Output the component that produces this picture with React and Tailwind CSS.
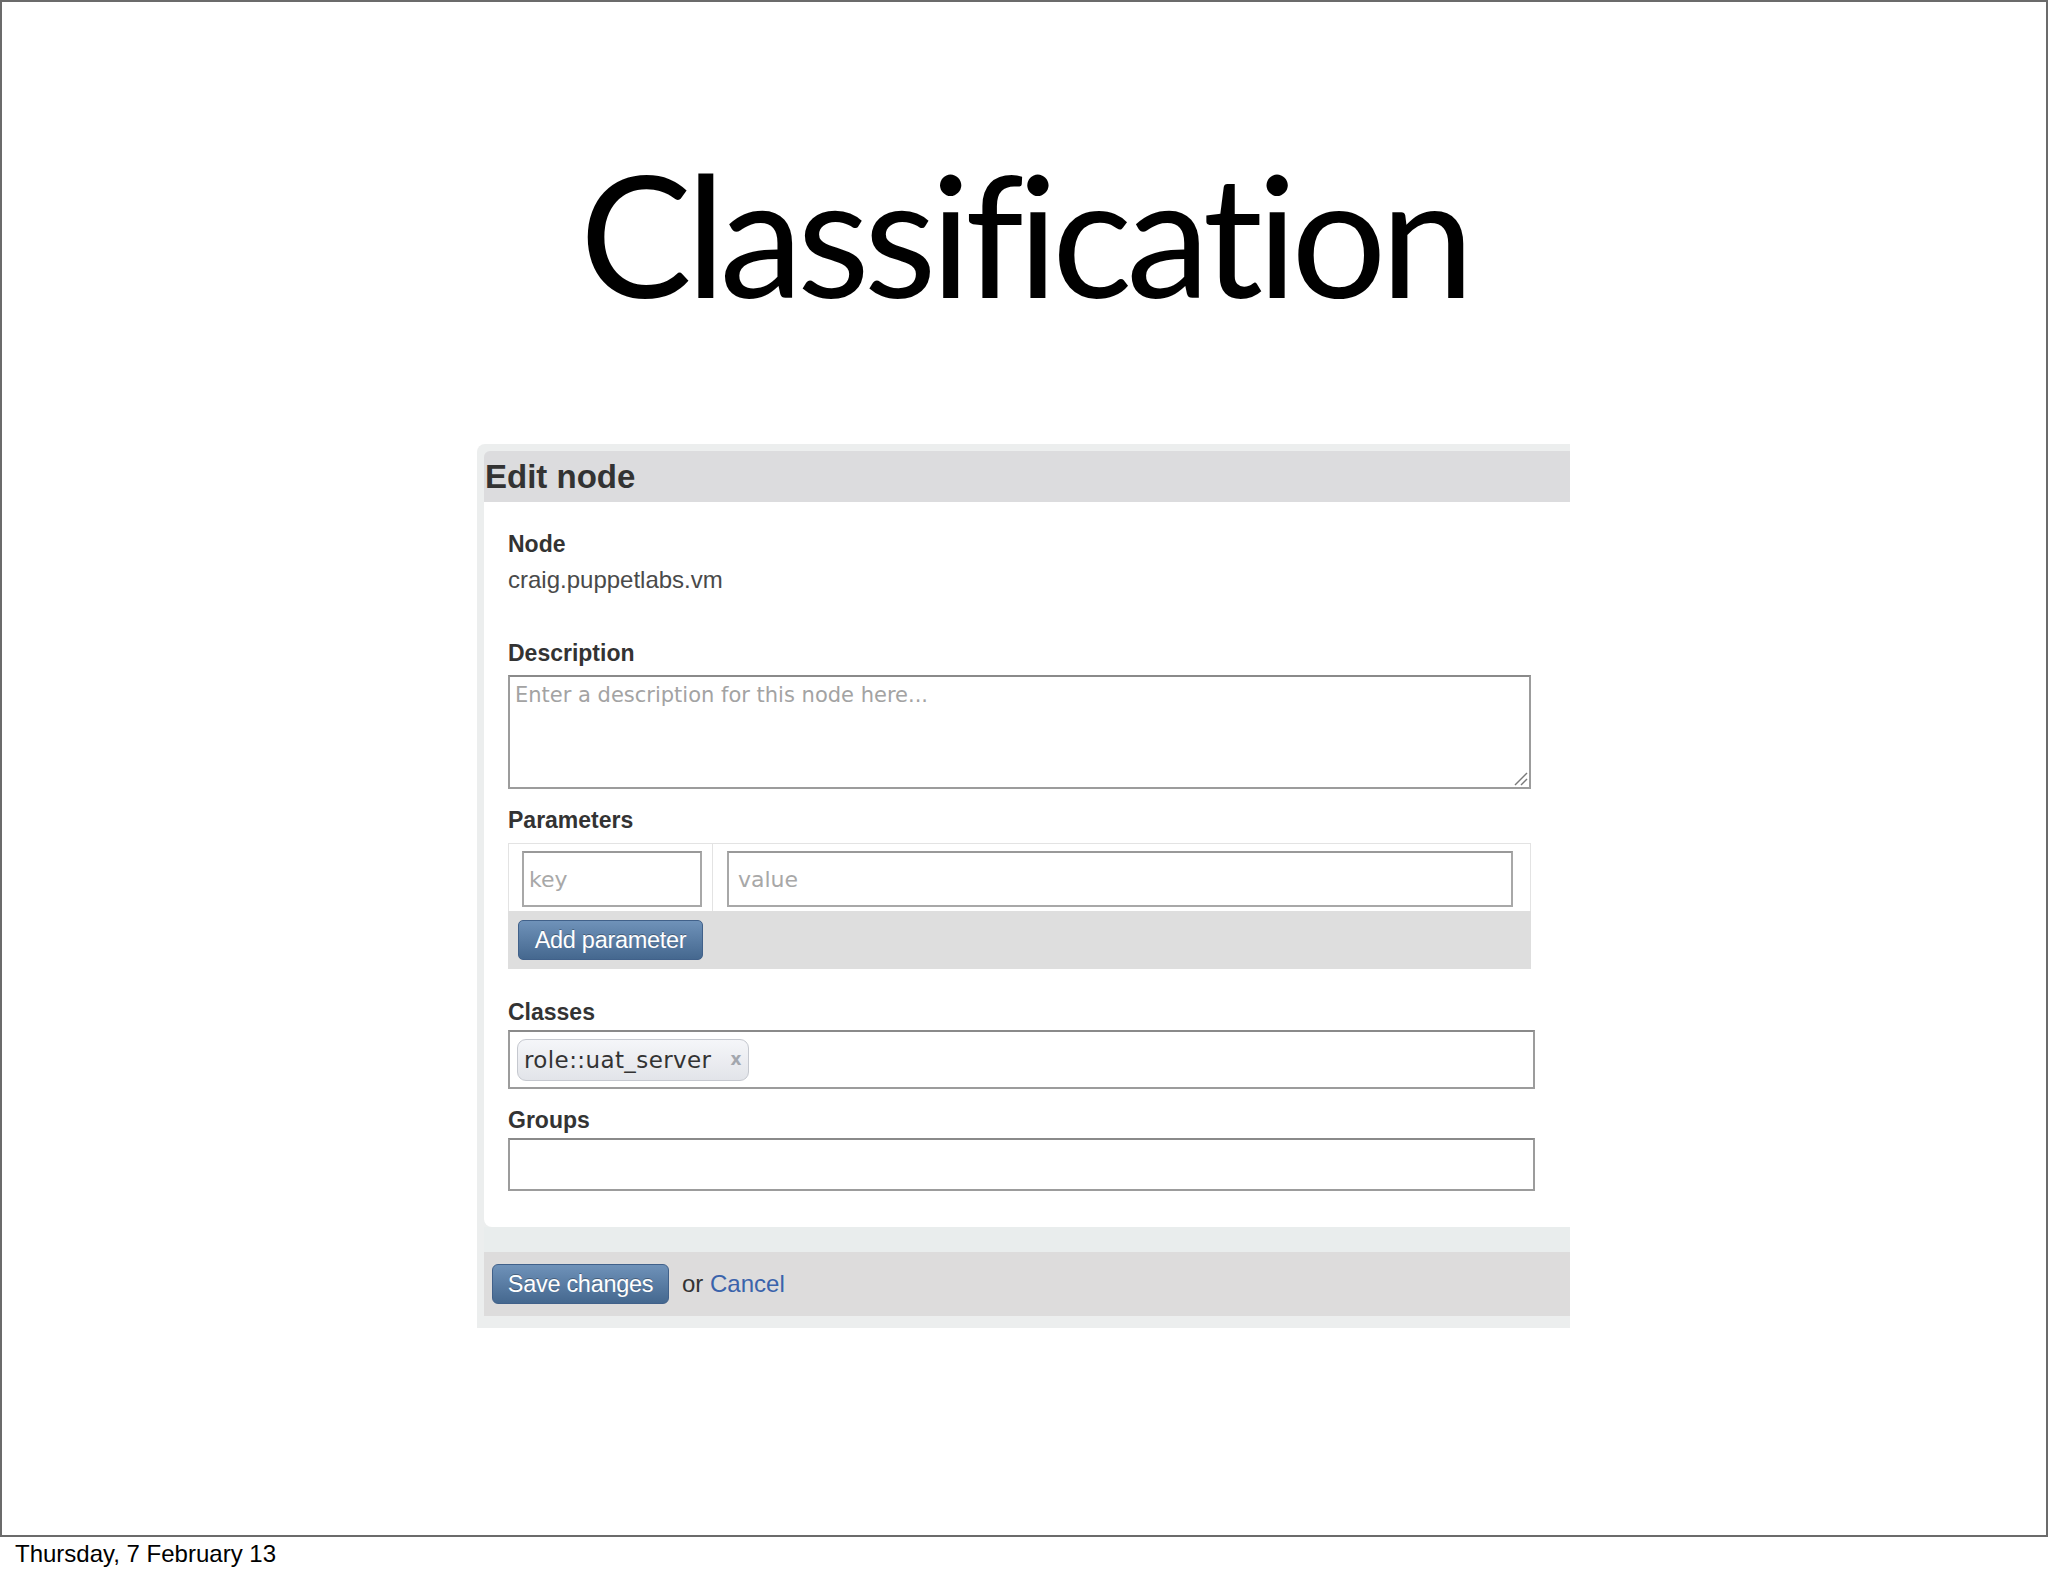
export default function App() {
  const label = "font-bold text-[23px] leading-[28px] text-[#333333]";
  return (
    <div className="w-[2048px] h-[1576px] bg-white font-['Liberation_Sans',Arial,sans-serif]">
      <div className="h-[1537px] border-2 border-[#6b6b6b] flex flex-col">
        <h1 className="mt-[147px] h-[168px] text-center font-['Lato',sans-serif] text-[168px] leading-[168px] text-black tracking-[-6px]">
          Classification
        </h1>
        <div className="mt-[127px] ml-[475px] w-[1093px] bg-[#eceeee] pl-[7px] pt-[7px] pb-[12px] rounded-tl-[8px]">
          <div className="h-[51px] bg-[#dcdcde] rounded-tl-[6px] pl-[1px] font-bold text-[33px] leading-[51px] text-[#333333]">
            Edit node
          </div>
          <div className="bg-white rounded-bl-[8px] pl-[24px] pb-[36px] flex flex-col">
            <div className={`${label} mt-[28px]`}>Node</div>
            <div className="mt-[8px] text-[24px] leading-[28px] text-[#4a4a4a]">craig.puppetlabs.vm</div>
            <div className={`${label} mt-[45px]`}>Description</div>
            <div className="relative mt-[8px] h-[114px] w-[1023px] border-2 border-[#9c9c9c] border-t-[#8a8a8a] bg-white pl-[5px] pt-[6px] font-['DejaVu_Sans',sans-serif] text-[21px] leading-[24px] text-[#a3a3a3]">
              Enter a description for this node here...
              <svg className="absolute right-[1px] bottom-[1px]" width="16" height="16" viewBox="0 0 16 16">
                <line x1="15" y1="3" x2="3" y2="15" stroke="#7a7a7a" strokeWidth="1.5" />
                <line x1="15" y1="9" x2="9" y2="15" stroke="#7a7a7a" strokeWidth="1.5" />
              </svg>
            </div>
            <div className={`${label} mt-[17px]`}>Parameters</div>
            <div className="mt-[9px] w-[1023px] h-[126px] flex flex-col">
              <div className="h-[68px] flex border-t border-x border-[#e3e3e3] bg-white">
                <div className="w-[204px] border-r border-[#e3e3e3] pl-[13px] pt-[7px]">
                  <div className="w-[180px] h-[56px] border-2 border-[#a8a8a8] border-t-[#999999] pl-[5px] flex items-center font-['DejaVu_Sans',sans-serif] text-[22px] text-[#a8a8a8]">
                    key
                  </div>
                </div>
                <div className="flex-1 pl-[14px] pr-[17px] pt-[7px]">
                  <div className="h-[56px] border-2 border-[#a8a8a8] border-t-[#999999] pl-[9px] flex items-center font-['DejaVu_Sans',sans-serif] text-[22px] text-[#a8a8a8]">
                    value
                  </div>
                </div>
              </div>
              <div className="flex-1 bg-[#dedede] pl-[10px] pt-[9px]">
                <div className="w-[185px] h-[40px] rounded-[5px] border border-[#41618a] bg-linear-to-b from-[#6f92b9] to-[#45688f] text-white text-[23.5px] leading-[38px] text-center tracking-[-0.3px] [text-shadow:0_-1px_0_rgba(0,0,0,0.3)]">
                  Add parameter
                </div>
              </div>
            </div>
            <div className={`${label} mt-[29px]`}>Classes</div>
            <div className="mt-[4px] w-[1027px] h-[59px] border-2 border-[#9c9c9c] border-t-[#8a8a8a] pl-[7px] pt-[7px]">
              <div className="inline-flex items-center h-[42px] rounded-[9px] border border-[#c5c8cf] bg-linear-to-b from-[#f5f6f9] to-[#e2e4e9] pl-[6px] pr-[7px]">
                <span className="font-['DejaVu_Sans',sans-serif] text-[23px] tracking-[0.4px] text-[#333333]">role::uat_server</span>
                <span className="ml-[19px] font-['DejaVu_Sans',sans-serif] font-bold text-[17px] text-[#a3a7ae]">x</span>
              </div>
            </div>
            <div className={`${label} mt-[17px]`}>Groups</div>
            <div className="mt-[4px] w-[1027px] h-[53px] border-2 border-[#9c9c9c] border-t-[#8a8a8a] bg-white"></div>
          </div>
          <div className="h-[25px] bg-[#e9eded]"></div>
          <div className="h-[64px] bg-[#dddcdc] pl-[8px] flex items-center">
            <div className="w-[177px] h-[40px] rounded-[6px] border border-[#41618a] bg-linear-to-b from-[#6f92b9] to-[#45688f] text-white text-[23.5px] leading-[38px] text-center tracking-[-0.3px] [text-shadow:0_-1px_0_rgba(0,0,0,0.3)]">
              Save changes
            </div>
            <div className="ml-[13px] text-[24px] text-[#333333]">
              or <span className="text-[#3a63ab]">Cancel</span>
            </div>
          </div>
        </div>
      </div>
      <div className="pl-[15px] pt-[3px] text-[24px] leading-[28px] text-black">Thursday, 7 February 13</div>
    </div>
  );
}
